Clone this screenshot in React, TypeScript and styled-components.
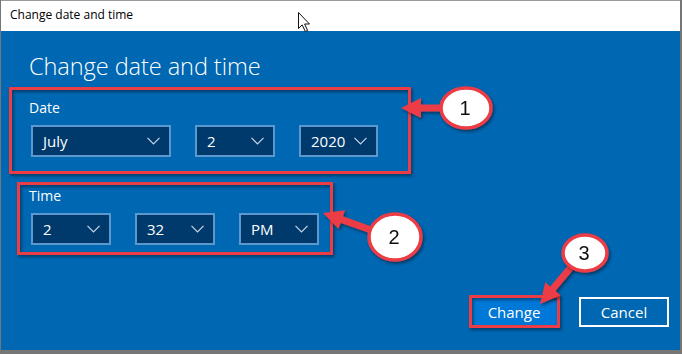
import React from "react";
import styled, { createGlobalStyle } from "styled-components";

const GlobalStyle = createGlobalStyle`
  html, body {
    margin: 0;
    padding: 0;
    background: #767676;
    font-family: "Open Sans", "Noto Sans", sans-serif;
  }
`;

const RED = "#ec3c46";

type Point = [number, number];

// arrow polygon from tail to tip, shaft width w, head length hl, head half width hw
function arrowPoints(tail: Point, tip: Point, w = 7, hl = 20, hw = 10) {
  const dx = tip[0] - tail[0];
  const dy = tip[1] - tail[1];
  const len = Math.hypot(dx, dy);
  const ux = dx / len;
  const uy = dy / len;
  const px = -uy;
  const py = ux;
  const bx = tip[0] - ux * hl;
  const by = tip[1] - uy * hl;
  const pts: Point[] = [
    [tail[0] + (px * w) / 2, tail[1] + (py * w) / 2],
    [bx + (px * w) / 2, by + (py * w) / 2],
    [bx + px * hw, by + py * hw],
    tip,
    [bx - px * hw, by - py * hw],
    [bx - (px * w) / 2, by - (py * w) / 2],
    [tail[0] - (px * w) / 2, tail[1] - (py * w) / 2],
  ];
  return pts.map((p) => p.join(",")).join(" ");
}

const arrows = [
  { tail: [442, 108] as Point, tip: [401, 108] as Point },
  { tail: [374, 231] as Point, tip: [323, 213] as Point },
  { tail: [572, 266] as Point, tip: [540, 304] as Point },
];

const bubbles = [
  { cx: 466, cy: 108, rx: 25, ry: 20, label: "1" },
  { cx: 395, cy: 237, rx: 26, ry: 23, label: "2" },
  { cx: 585, cy: 253, rx: 22, ry: 18, label: "3" },
];

const dateRow = [
  { value: "July", width: 140 },
  { value: "2", width: 80 },
  { value: "2020", width: 79 },
];

const timeRow = [
  { value: "2", width: 80 },
  { value: "32", width: 80 },
  { value: "PM", width: 80 },
];

function Chevron() {
  return (
    <svg width="13" height="8" viewBox="0 0 13 8">
      <path d="M0.5 0.8 L6.5 6.8 L12.5 0.8" fill="none" stroke="#c6d6e6" strokeWidth="1.2" />
    </svg>
  );
}

function Dropdown({ value, width }: { value: string; width: number }) {
  return (
    <Select $width={width}>
      <span>{value}</span>
      <Chevron />
    </Select>
  );
}

export default function App() {
  return (
    <Screen>
      <GlobalStyle />
      <Window>
        <TitleBar>Change date and time</TitleBar>
        <Body>
          <Heading>Change date and time</Heading>
          <Field>
            <Label>Date</Label>
            <Row>
              {dateRow.map((d, i) => (
                <Dropdown key={i} value={d.value} width={d.width} />
              ))}
            </Row>
          </Field>
          <Field $gap={29}>
            <Label>Time</Label>
            <Row>
              {timeRow.map((d, i) => (
                <Dropdown key={i} value={d.value} width={d.width} />
              ))}
            </Row>
          </Field>
          <Footer>
            <Button $primary>Change</Button>
            <Button>Cancel</Button>
          </Footer>
        </Body>
      </Window>

      <Overlay width="682" height="354" viewBox="0 0 682 354">
        <defs>
          <filter id="sh" x="-20%" y="-20%" width="140%" height="140%">
            <feDropShadow dx="1.5" dy="2" stdDeviation="1.5" floodColor="#000" floodOpacity="0.45" />
          </filter>
        </defs>
        <g filter="url(#sh)" fill="none" stroke={RED} strokeWidth="3">
          <rect x="10.5" y="88.5" width="399" height="84" />
          <rect x="18.5" y="183.5" width="313" height="70" />
          <rect x="470.5" y="296.5" width="88" height="30" />
        </g>
        <g filter="url(#sh)" fill={RED}>
          {arrows.map((a, i) => (
            <polygon key={i} points={arrowPoints(a.tail, a.tip)} />
          ))}
        </g>
        {bubbles.map((b) => (
          <g key={b.label} filter="url(#sh)">
            <ellipse cx={b.cx} cy={b.cy} rx={b.rx} ry={b.ry} fill="#fff" stroke={RED} strokeWidth="3.5" />
            <text
              x={b.cx - 1}
              y={b.cy + 7}
              textAnchor="middle"
              fontFamily="'Liberation Sans', Arial, sans-serif"
              fontSize="20"
              fill="#111"
            >
              {b.label}
            </text>
          </g>
        ))}
        <path
          d="M298.5 12.5 L298.5 28.5 L302.2 24.9 L305.3 31.5 L307.6 30.5 L304.6 24 L309.5 24 Z"
          fill="#fff"
          stroke="#111"
          strokeWidth="1"
        />
      </Overlay>
    </Screen>
  );
}

const Screen = styled.div`
  position: relative;
  width: 682px;
  height: 354px;
  overflow: hidden;
`;

const Window = styled.div`
  display: flex;
  flex-direction: column;
  width: 679px;
  height: 350px;
  margin-left: 1px;
`;

const TitleBar = styled.div`
  height: 31px;
  box-sizing: border-box;
  border-top: 1px solid #9a9a9a;
  background: #fff;
  padding: 5px 0 0 9px;
  font-size: 12px;
  line-height: 18px;
  color: #000;
`;

const Body = styled.div`
  flex: 1;
  display: flex;
  flex-direction: column;
  background: #0067b2;
  padding: 0 11px 23px 28px;
  color: #fff;
`;

const Heading = styled.div`
  margin-top: 19px;
  font-size: 23.6px;
  font-weight: 300;
  line-height: 32px;
  letter-spacing: -0.1px;
`;

const Field = styled.div<{ $gap?: number }>`
  display: flex;
  flex-direction: column;
  margin-top: ${(p) => p.$gap ?? 16}px;
`;

const Label = styled.div`
  font-size: 14px;
  line-height: 20px;
  margin-bottom: 7px;
`;

const Row = styled.div`
  display: flex;
  gap: 24px;
  margin-left: 2px;
`;

const Select = styled.div<{ $width: number }>`
  display: flex;
  align-items: center;
  justify-content: space-between;
  box-sizing: border-box;
  width: ${(p) => p.$width}px;
  height: 32px;
  padding: 0 9px 0 10px;
  background: #003a6c;
  border: 2px solid #5c97cd;
  font-size: 15px;
  color: #fff;
`;

const Footer = styled.div`
  margin-top: auto;
  display: flex;
  justify-content: flex-end;
  gap: 20px;
`;

const Button = styled.div<{ $primary?: boolean }>`
  display: flex;
  align-items: center;
  justify-content: center;
  box-sizing: border-box;
  width: 90px;
  height: 30px;
  font-size: 15px;
  color: #fff;
  background: ${(p) => (p.$primary ? "#0078d7" : "transparent")};
  border: 2px solid ${(p) => (p.$primary ? "#0078d7" : "#fff")};
`;

const Overlay = styled.svg`
  position: absolute;
  left: 0;
  top: 0;
  pointer-events: none;
`;
